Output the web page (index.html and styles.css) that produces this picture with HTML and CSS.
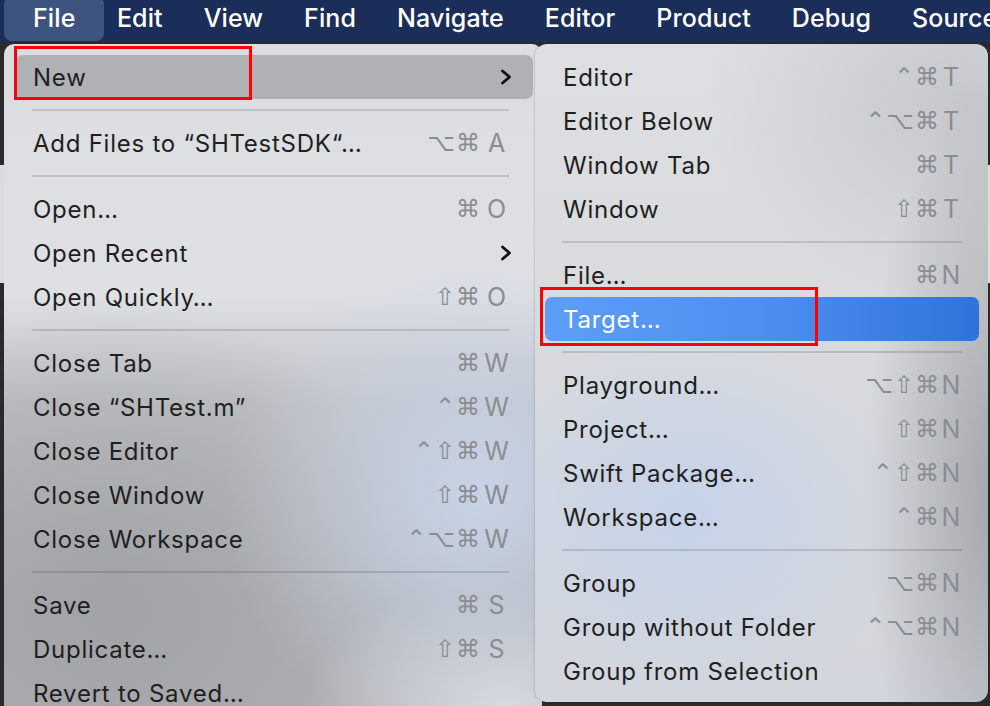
FILE: index.html
```html
<!DOCTYPE html>
<html>
<head>
<meta charset="utf-8">
<link rel="stylesheet" href="styles.css">
</head>
<body>
<div class="screen">
  <nav class="menubar">
    <span class="mb-item active">File</span>
    <span class="mb-item">Edit</span>
    <span class="mb-item">View</span>
    <span class="mb-item">Find</span>
    <span class="mb-item">Navigate</span>
    <span class="mb-item">Editor</span>
    <span class="mb-item">Product</span>
    <span class="mb-item">Debug</span>
    <span class="mb-item">Source</span>
  </nav>
  <div class="menus">
    <div class="menu main">
      <div class="row hl-gray mark-new">
        <span class="label">New</span>
        <svg class="chev" width="12" height="16" viewBox="0 0 12 16"><path d="M2.5 2 L9.5 8 L2.5 14" fill="none" stroke="#111" stroke-width="2.8" stroke-linecap="round" stroke-linejoin="round"/></svg>
      </div>
      <div class="sep"></div>
      <div class="row"><span class="label">Add Files to “SHTestSDK“…</span><span class="sc"><span class="mods">⌥⌘</span><span class="key">A</span></span></div>
      <div class="sep"></div>
      <div class="row"><span class="label">Open…</span><span class="sc"><span class="mods">⌘</span><span class="key">O</span></span></div>
      <div class="row"><span class="label">Open Recent</span>
        <svg class="chev" width="12" height="16" viewBox="0 0 12 16"><path d="M2.5 2 L9.5 8 L2.5 14" fill="none" stroke="#111" stroke-width="2.8" stroke-linecap="round" stroke-linejoin="round"/></svg>
      </div>
      <div class="row"><span class="label">Open Quickly…</span><span class="sc"><span class="mods">⇧⌘</span><span class="key">O</span></span></div>
      <div class="sep"></div>
      <div class="row"><span class="label">Close Tab</span><span class="sc"><span class="mods">⌘</span><span class="key">W</span></span></div>
      <div class="row"><span class="label">Close “SHTest.m”</span><span class="sc"><span class="mods">⌃⌘</span><span class="key">W</span></span></div>
      <div class="row"><span class="label">Close Editor</span><span class="sc"><span class="mods">⌃⇧⌘</span><span class="key">W</span></span></div>
      <div class="row"><span class="label">Close Window</span><span class="sc"><span class="mods">⇧⌘</span><span class="key">W</span></span></div>
      <div class="row"><span class="label">Close Workspace</span><span class="sc"><span class="mods">⌃⌥⌘</span><span class="key">W</span></span></div>
      <div class="sep"></div>
      <div class="row"><span class="label">Save</span><span class="sc"><span class="mods">⌘</span><span class="key">S</span></span></div>
      <div class="row"><span class="label">Duplicate…</span><span class="sc"><span class="mods">⇧⌘</span><span class="key">S</span></span></div>
      <div class="row"><span class="label">Revert to Saved…</span></div>
    </div>
    <div class="menu sub">
      <div class="row"><span class="label">Editor</span><span class="sc"><span class="mods">⌃⌘</span><span class="key">T</span></span></div>
      <div class="row"><span class="label">Editor Below</span><span class="sc"><span class="mods">⌃⌥⌘</span><span class="key">T</span></span></div>
      <div class="row"><span class="label">Window Tab</span><span class="sc"><span class="mods">⌘</span><span class="key">T</span></span></div>
      <div class="row"><span class="label">Window</span><span class="sc"><span class="mods">⇧⌘</span><span class="key">T</span></span></div>
      <div class="sep"></div>
      <div class="row"><span class="label">File…</span><span class="sc"><span class="mods">⌘</span><span class="key">N</span></span></div>
      <div class="row hl-blue mark-target"><span class="label">Target…</span></div>
      <div class="sep"></div>
      <div class="row"><span class="label">Playground…</span><span class="sc"><span class="mods">⌥⇧⌘</span><span class="key">N</span></span></div>
      <div class="row"><span class="label">Project…</span><span class="sc"><span class="mods">⇧⌘</span><span class="key">N</span></span></div>
      <div class="row"><span class="label">Swift Package…</span><span class="sc"><span class="mods">⌃⇧⌘</span><span class="key">N</span></span></div>
      <div class="row"><span class="label">Workspace…</span><span class="sc"><span class="mods">⌃⌘</span><span class="key">N</span></span></div>
      <div class="sep"></div>
      <div class="row"><span class="label">Group</span><span class="sc"><span class="mods">⌥⌘</span><span class="key">N</span></span></div>
      <div class="row"><span class="label">Group without Folder</span><span class="sc"><span class="mods">⌃⌥⌘</span><span class="key">N</span></span></div>
      <div class="row"><span class="label">Group from Selection</span></div>
    </div>
  </div>
</div>
</body>
</html>
```
FILE: styles.css
```css
*, *::before, *::after { box-sizing: border-box; }
html, body { margin: 0; padding: 0; }
body {
  width: 990px;
  height: 706px;
  overflow: hidden;
  background: #262626;
  font-family: "Inter", "Noto Sans", sans-serif;
}
.screen {
  width: 990px;
  height: 706px;
  overflow: hidden;
  background: linear-gradient(180deg, #2a2a2c 0, #2a2a2c 165px, #dcdcdc 165px, #dcdcdc 283px, #2a2a2a 283px);
}
.menubar {
  height: 42px;
  background: #1b2e59;
  display: flex;
  align-items: flex-start;
  padding-left: 12px;
  white-space: nowrap;
}
.mb-item {
  position: relative;
  flex: none;
  padding: 0 20.5px;
  color: #ffffff;
  font-size: 25px;
  font-weight: 500;
  line-height: 36px;
  letter-spacing: 0.1px;
}
.mb-item:first-child { padding: 0 21px; }
.mb-item.active { isolation: isolate; }
.mb-item.active::before {
  content: "";
  position: absolute;
  left: -8px;
  right: -8px;
  top: -4px;
  height: 45px;
  border-radius: 8px;
  background: #3d5481;
  z-index: -1;
}

.menus {
  display: flex;
  align-items: flex-start;
  margin-top: 2px;
}
.menu {
  font-size: 24px;
  letter-spacing: 0.75px;
  color: #1f1f21;
  padding-top: 11px;
}
.menu.main {
  width: 538px;
  height: 700px;
  margin-left: 4px;
  border-radius: 10px 10px 0 0;
  background:
    radial-gradient(ellipse 250px 260px at 470px 450px, rgba(200, 212, 232, 0.95), rgba(200, 212, 232, 0) 100%),
    radial-gradient(ellipse 200px 120px at 500px 660px, rgba(222, 223, 226, 0.9), rgba(222, 223, 226, 0) 100%),
    radial-gradient(ellipse 320px 300px at 110px 560px, rgba(160, 161, 164, 0.9), rgba(160, 161, 164, 0) 100%),
    linear-gradient(180deg, #dcdde0 0, #dfe0e3 250px, #c0c1c4 360px, #b0b1b4 560px);
  padding-left: 12px;
  padding-right: 9px;
}
.menu.sub {
  width: 453px;
  height: 658px;
  margin-left: -7px;
  border-radius: 12px;
  background:
    radial-gradient(ellipse 230px 190px at 150px 470px, rgba(196, 210, 234, 0.95), rgba(196, 210, 234, 0) 100%),
    radial-gradient(ellipse 140px 420px at 470px 450px, rgba(158, 160, 166, 0.95), rgba(158, 160, 166, 0) 100%),
    radial-gradient(ellipse 260px 200px at 430px 60px, rgba(196, 197, 201, 0.9), rgba(196, 197, 201, 0) 100%),
    linear-gradient(180deg, #dedfe2 0, #d9dadd 300px, #d3d6dc 658px);
  padding-left: 10px;
  padding-right: 9px;
  padding-bottom: 9px;
  box-shadow: -1px 0 2px rgba(0, 0, 0, 0.12);
}
.row {
  position: relative;
  height: 44px;
  display: flex;
  align-items: center;
  border-radius: 7px;
}
.main .row { padding: 0 21px 0 17px; }
.sub .row { padding: 0 17px 0 18px; }
.label {
  flex: 1;
  white-space: nowrap;
}
.sc {
  display: flex;
  align-items: center;
  color: #8c8c91;
  letter-spacing: 0;
}
.mods {
  font-family: "DejaVu Sans", sans-serif;
  font-size: 24px;
  letter-spacing: 1px;
}
.key { font-size: 25px; }
.main .key { width: 31px; text-align: center; }
.sub .key { width: 22px; text-align: center; }

.hl-gray { background: rgba(140, 141, 145, 0.55); }
.hl-blue {
  background: linear-gradient(90deg, #5d9ef7 0, #4e8ef0 50%, #2f73da 100%);
  color: #ffffff;
}
.sep {
  height: 2px;
  background: rgba(0, 0, 0, 0.13);
  margin-top: 10px;
  margin-bottom: 10px;
}
.main .sep { margin-left: 16px; margin-right: 24px; }
.sub .sep { margin-left: 17px; margin-right: 17px; }

.mark-new::after, .mark-target::after {
  content: "";
  position: absolute;
  border: 3px solid #ff0000;
}
.mark-new::after { left: -2px; top: -9px; width: 238px; height: 54px; }
.mark-target::after { left: -5px; top: -10px; width: 278px; height: 59px; }
```
